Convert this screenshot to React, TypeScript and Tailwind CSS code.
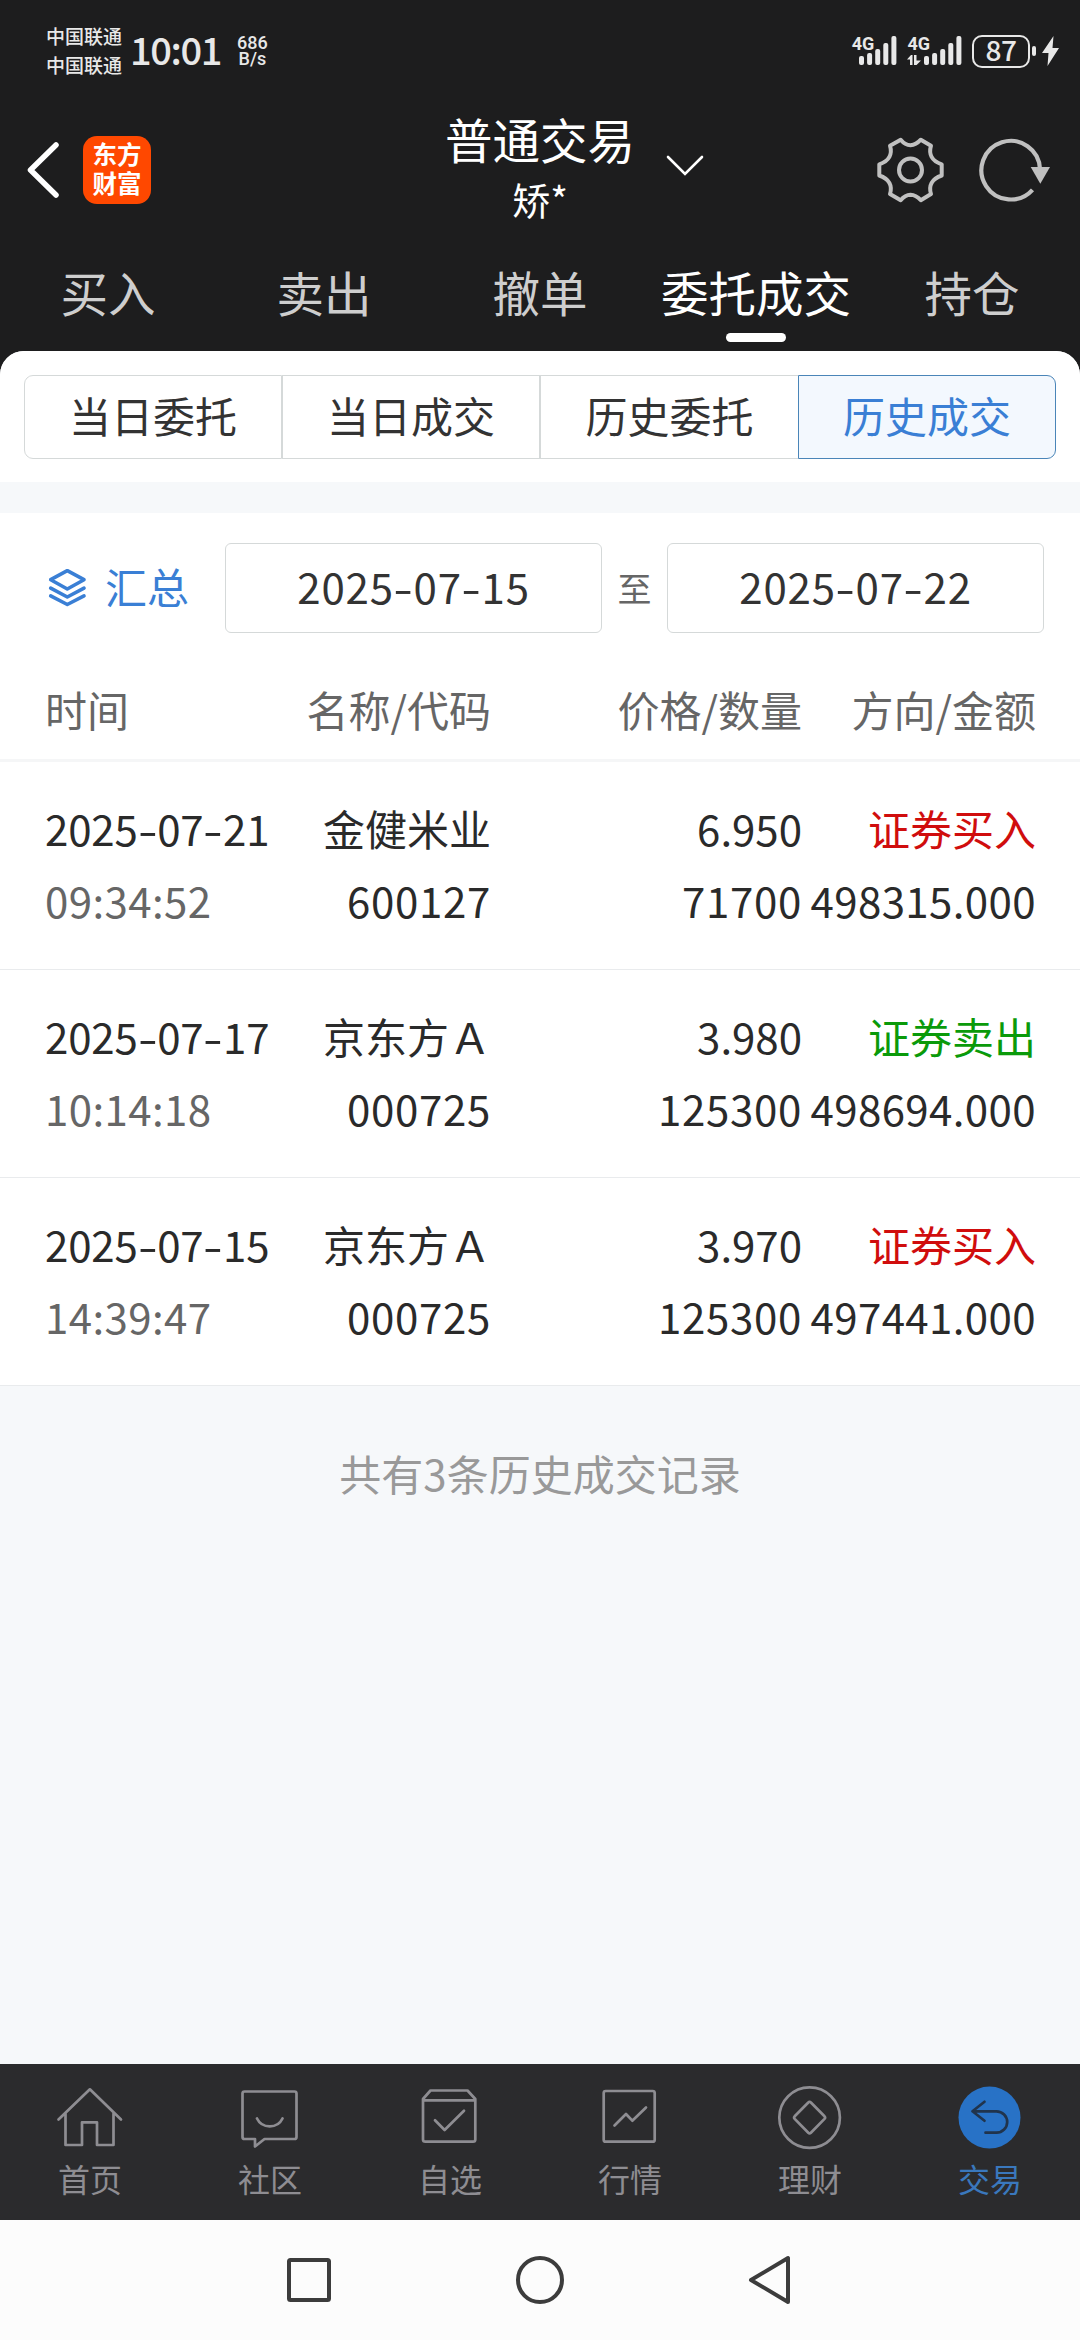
import type { ReactNode } from "react";

const primaryTabs = ["买入", "卖出", "撤单", "委托成交", "持仓"];
const recordTabs = ["当日委托", "当日成交", "历史委托", "历史成交"];

type Trade = {
  date: string;
  time: string;
  name: string;
  code: string;
  price: string;
  quantity: string;
  side: "buy" | "sell";
  amount: string;
};

const trades: Trade[] = [
  { date: "2025-07-21", time: "09:34:52", name: "金健米业", code: "600127", price: "6.950", quantity: "71700", side: "buy", amount: "498315.000" },
  { date: "2025-07-17", time: "10:14:18", name: "京东方Ａ", code: "000725", price: "3.980", quantity: "125300", side: "sell", amount: "498694.000" },
  { date: "2025-07-15", time: "14:39:47", name: "京东方Ａ", code: "000725", price: "3.970", quantity: "125300", side: "buy", amount: "497441.000" },
];

function SignalBars() {
  return (
    <svg width="38" height="30" viewBox="0 0 38 30" fill="#e8e8e8">
      <rect x="0" y="20" width="5" height="9" rx="2" />
      <rect x="8.1" y="17" width="5" height="12" rx="2" />
      <rect x="16.2" y="13" width="5" height="16" rx="2" />
      <rect x="24.3" y="7" width="5" height="22" rx="2" />
      <rect x="32.4" y="0" width="5" height="29" rx="2" />
    </svg>
  );
}

function StatusBar() {
  return (
    <div className="flex h-[102px] items-center justify-between pr-[21px] pl-[46px] text-[#e8e8e8]">
      <div className="flex items-center pb-[2px] font-medium">
        <div className="flex flex-col text-[19px] leading-[29px]">
          <span>中国联通</span>
          <span>中国联通</span>
        </div>
        <span className="ml-[8px] w-[93px] pb-[2px] text-[38px] leading-[40px] tracking-[-1.4px] whitespace-nowrap">10:01</span>
        <div className="ml-[14px] flex flex-col items-center pt-[2px] font-['Roboto'] text-[18px] leading-[16px]">
          <span>686</span>
          <span>B/s</span>
        </div>
      </div>
      <div className="flex h-[34px] items-center">
        <div className="flex h-[30px]">
          <span className="-mr-[15px] h-4 font-['Roboto'] text-[18px] leading-[16px] font-bold">4G</span>
          <SignalBars />
        </div>
        <div className="ml-[10px] flex h-[30px]">
          <div className="-mr-[6px] flex flex-col items-start">
            <span className="font-['Roboto'] text-[18px] leading-[16px] font-bold">4G</span>
            <svg className="mt-[3px]" width="14" height="10" viewBox="0 0 14 10" fill="#e8e8e8">
              <path d="M0 4.5 4 0h1.5v10H3V4.5zM7 0h2.5v5.5H14L9.5 10H7z" />
            </svg>
          </div>
          <SignalBars />
        </div>
        <div className="ml-[10px] flex h-[33px] w-[58px] items-center justify-center rounded-[10px] border-2 border-[#e8e8e8] pb-[4px] text-[28px] leading-[28px] font-medium tracking-[-0.5px]">87</div>
        <div className="ml-[2px] h-[10px] w-1 rounded-[2px] bg-[#e8e8e8]" />
        <svg className="ml-[6px]" width="17" height="30" viewBox="0 0 17 30" fill="#e8e8e8">
          <path d="M11.5 0 0 17h6.5L5.5 30 17 12h-6.5z" />
        </svg>
      </div>
    </div>
  );
}

function GearIcon() {
  return (
    <svg width="73" height="72" viewBox="0 0 73 72" fill="none" stroke="#c0c0c0" strokeWidth="4" strokeLinejoin="round">
      <path d="M26.7 5.7Q31 11 36.5 11.2Q42 11 46.8 5.7L57 11.7C54.5 20 57.5 27 67.7 30.3V41.5C57.5 45 54.5 52 57 60L46.8 66.2Q42 61 36.5 60.8Q31 61 26.7 66.2L16 60C18.5 52 15.5 45 5.3 41.5V30.3C15.5 27 18.5 20 16 11.7Z" />
      <circle cx="36.5" cy="36" r="11.5" />
    </svg>
  );
}

function RefreshIcon() {
  return (
    <svg width="80" height="72" viewBox="0 0 80 72" fill="none">
      <path d="M66 35A29.3 29.3 0 1 0 58.5 55.8" stroke="#c0c0c0" strokeWidth="4.2" />
      <path d="M56.7 33H76L66.3 49.7Z" fill="#c0c0c0" />
    </svg>
  );
}

function Header() {
  return (
    <header className="grid h-[136px] grid-cols-[1fr_auto_1fr] items-center">
      <div className="flex items-center pl-[26px]">
        <svg width="34" height="58" viewBox="0 0 34 58" fill="none" stroke="#fff" strokeWidth="5.5" strokeLinecap="round" strokeLinejoin="round">
          <path d="M30 4 4.5 29 30 54" />
        </svg>
        <div className="ml-[23px] flex h-[68px] w-[68px] flex-col items-center justify-center rounded-[14px] bg-[#ff4800] pb-[5px] text-[24.5px] leading-[29px] font-bold text-white">
          <span>东方</span>
          <span>财富</span>
        </div>
      </div>
      <div className="flex flex-col items-center text-white">
        <div className="relative text-[47.5px] leading-[56px]">
          普通交易
          <svg className="absolute top-[43px] left-[220px]" width="40" height="24" viewBox="0 0 40 24" fill="none" stroke="#fff" strokeWidth="2.6" strokeLinecap="round">
            <path d="m3 3 17 17L37 3" />
          </svg>
        </div>
        <span className="pt-[2px] text-[38px] leading-[60px]">矫*</span>
      </div>
      <div className="flex items-center justify-end pr-[26px]">
        <GearIcon />
        <span className="w-[27px]" />
        <RefreshIcon />
      </div>
    </header>
  );
}

function LayersIcon() {
  return (
    <svg width="43" height="40" viewBox="0 0 43 40" fill="none" stroke="#3a7fd5" strokeWidth="3.6" strokeLinecap="round" strokeLinejoin="round">
      <path d="M21.3 2.7 38 11.7 21.3 21 4.7 11.7ZM4.7 20.2 21.3 29 38 20.2M4.7 27.8 21.3 36.5 38 27.8" />
    </svg>
  );
}

function Dated({ value }: { value: string }) {
  return (
    <>
      {value.split("-").map((part, i) => (
        <span key={i}>
          {i > 0 && <span className="inline-block w-[19.5px] scale-x-135 text-center">-</span>}
          {part}
        </span>
      ))}
    </>
  );
}

function TradeRow({ trade }: { trade: Trade }) {
  const sideColor = trade.side === "buy" ? "text-[#d00d0d]" : "text-[#0a9a0a]";
  return (
    <div className="grid h-[208px] grid-cols-[250px_196px_311px_234px] content-center border-b border-[#e9ebed] pb-[4px] pl-[45px] text-[42px] leading-[72px] whitespace-nowrap text-[#2a2a2a]">
      <span className="tracking-[-0.15px]"><Dated value={trade.date} /></span>
      <span className="text-right">{trade.name}</span>
      <span className="text-right">{trade.price}</span>
      <span className={`text-right ${sideColor}`}>{trade.side === "buy" ? "证券买入" : "证券卖出"}</span>
      <span className="tracking-[0.4px] text-[#666]">{trade.time}</span>
      <span className="text-right tracking-[0.7px]">{trade.code}</span>
      <span className="text-right tracking-[0.7px]">{trade.quantity}</span>
      <span className="text-right tracking-[0.4px]">{trade.amount}</span>
    </div>
  );
}

function NavIcon({ children }: { children: ReactNode }) {
  return (
    <svg width="72" height="72" viewBox="0 0 72 72" fill="none" stroke="#8e8d92" strokeWidth="2.7" strokeLinecap="round" strokeLinejoin="round">
      {children}
    </svg>
  );
}

const navItems: { label: string; icon: ReactNode }[] = [
  {
    label: "首页",
    icon: <path d="M4.5 37.5 35.9 7.3 67 37.5M11.5 31.5V63H28V40.3H43V63H59.5V31.5" />,
  },
  {
    label: "社区",
    icon: <path d="M10.5 9.5H60.5Q62.5 9.5 62.5 11.5V55Q62.5 57 60.5 57H30.5L21 64.5V57H10.5Q8.5 57 8.5 55V11.5Q8.5 9.5 10.5 9.5ZM23 36.5C28 47 43.5 47 48.5 36.5" />,
  },
  {
    label: "自选",
    icon: <path d="M9 17 16.5 8.5H53.5L61.3 17V57.5Q61.3 59.7 59 59.7H11.5Q9 59.7 9 57.5ZM9.5 18.3H61M21 38.2 30.6 48 50 28.8" />,
  },
  {
    label: "行情",
    icon: <path d="M11.7 9H58.7Q60.7 9 60.7 11V57.7Q60.7 59.7 58.7 59.7H11.7Q9.7 59.7 9.7 57.7V11Q9.7 9 11.7 9ZM20.5 43.5 32 32 38.3 38.7 52 25.5" />,
  },
  {
    label: "理财",
    icon: (
      <>
        <circle cx="35.6" cy="35.6" r="30.3" />
        <path d="M34.3 20.5Q35.6 19 36.9 20.5L50.5 34.3Q51.7 35.6 50.5 36.9L36.9 50.7Q35.6 52 34.3 50.7L20.7 36.9Q19.5 35.6 20.7 34.3Z" />
      </>
    ),
  },
  {
    label: "交易",
    icon: (
      <>
        <circle cx="35.5" cy="35.6" r="31" fill="#2872c6" stroke="none" />
        <path d="M30.5 19.8 18.5 29.3 30.5 38.7M18.5 29.3H42.5A10.7 10.7 0 0 1 42.5 50.7H31.5" stroke="#20344d" />
      </>
    ),
  },
];

export default function App() {
  return (
    <div className="flex h-[2340px] w-[1080px] flex-col overflow-hidden bg-[#1d1d1e] font-['Noto_Sans_CJK_SC','Noto_Sans',sans-serif]">
      <StatusBar />
      <Header />
      <nav className="grid h-[113px] grid-cols-5 text-center text-[47.5px] leading-[108px] text-[#cecece]">
        {primaryTabs.map((tab) => (
          <div key={tab} className={tab === "委托成交" ? "relative whitespace-nowrap text-white" : ""}>
            {tab}
            {tab === "委托成交" && <span className="absolute bottom-[9px] left-[78px] h-[9px] w-[60px] rounded-full bg-white" />}
          </div>
        ))}
      </nav>

      <main className="flex min-h-0 flex-1 flex-col rounded-t-[24px] bg-[#f6f8fa]">
        <section className="h-[131px] rounded-t-[24px] bg-white px-6 pt-6">
          <div className="grid h-[84px] grid-cols-4 text-center text-[42px] leading-[78px] text-[#333]">
            {recordTabs.map((tab, i) => (
              <div
                key={tab}
                className={
                  i === 3
                    ? "rounded-r-[9px] border border-[#4a85b8] bg-[#f3f8fe] text-[#3a7fd5]"
                    : i === 0
                      ? "rounded-l-[9px] border border-[#d5d9d9]"
                      : i === 1
                        ? "border border-[#d5d9d9]"
                        : "border-y border-l border-[#d5d9d9]"
                }
              >
                {tab}
              </div>
            ))}
          </div>
        </section>

        <section className="mt-[31px] bg-white">
          <div className="flex h-[150px] items-center pl-[46px] text-[42px]">
            <LayersIcon />
            <span className="ml-[16px] pb-[5px] text-[#3a7fd5]">汇总</span>
            <div className="ml-[36px] h-[90px] w-[377px] rounded-[6px] border border-[#d5d9d9] text-center leading-[84px] tracking-[0.9px] text-[#333]">
              <Dated value="2025-07-15" />
            </div>
            <span className="w-[65px] pb-[2px] text-center text-[34px] text-[#666]">至</span>
            <div className="h-[90px] w-[377px] rounded-[6px] border border-[#d5d9d9] text-center leading-[84px] tracking-[0.9px] text-[#333]">
              <Dated value="2025-07-22" />
            </div>
          </div>
          <div className="grid h-[99px] grid-cols-[250px_196px_311px_234px] border-b-[3px] border-[#f5f6f7] pl-[45px] text-[42px] leading-[92px] text-[#666]">
            <span>时间</span>
            <span className="text-right">名称/代码</span>
            <span className="text-right">价格/数量</span>
            <span className="text-right">方向/金额</span>
          </div>
          {trades.map((trade) => (
            <TradeRow key={trade.date} trade={trade} />
          ))}
        </section>
        <p className="mt-[55px] text-center text-[42px] leading-[64px] text-[#999]">共有3条历史成交记录</p>
      </main>

      <nav className="grid h-[156px] grid-cols-6 bg-[#2b2b2d] pt-[18px]">
        {navItems.map((item) => (
          <div key={item.label} className={`flex flex-col items-center text-[32px] leading-[48px] ${item.label === "交易" ? "text-[#3a78bd]" : "text-[#8e8d92]"}`}>
            <NavIcon>{item.icon}</NavIcon>
            {item.label}
          </div>
        ))}
      </nav>

      <div className="flex h-[120px] items-center justify-center gap-[181px] bg-[#fcfcfc]">
        <svg width="50" height="50" viewBox="0 0 50 50" fill="none" stroke="#3c3c3c" strokeWidth="4">
          <rect x="5" y="5" width="40" height="40" rx="1.5" />
        </svg>
        <svg width="50" height="50" viewBox="0 0 50 50" fill="none" stroke="#3c3c3c" strokeWidth="4">
          <circle cx="25" cy="25" r="22" />
        </svg>
        <svg width="50" height="50" viewBox="0 0 50 50" fill="none" stroke="#3c3c3c" strokeWidth="4" strokeLinejoin="round">
          <path d="M5 25 42 3V47Z" />
        </svg>
      </div>
    </div>
  );
}
